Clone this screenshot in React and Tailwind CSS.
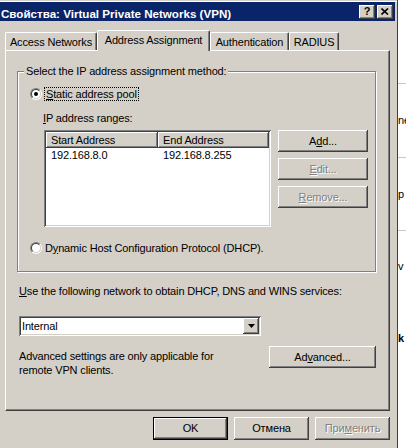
import React from "react";

const raised =
  "shadow-[inset_-1px_-1px_0_#404040,inset_1px_1px_0_#ffffff,inset_-2px_-2px_0_#808080,inset_2px_2px_0_#d4d0c8]";
const sunken =
  "shadow-[inset_1px_1px_0_#808080,inset_-1px_-1px_0_#ffffff,inset_2px_2px_0_#404040,inset_-2px_-2px_0_#d4d0c8]";
const disabledText = "text-[#808080] [text-shadow:1px_1px_0_#ffffff]";

function Radio({ checked }) {
  return (
    <span className="flex h-[12px] w-[12px] shrink-0 items-center justify-center rounded-full border border-t-[#808080] border-l-[#808080] border-b-white border-r-white">
      <span className="flex h-[10px] w-[10px] items-center justify-center rounded-full border border-t-[#404040] border-l-[#404040] border-b-[#d4d0c8] border-r-[#d4d0c8] bg-white">
        {checked && <span className="h-[4px] w-[4px] rounded-full bg-black" />}
      </span>
    </span>
  );
}

function Btn({ children, className = "", disabled = false }) {
  return (
    <div
      className={`flex items-center justify-center bg-[#d4d0c8] ${raised} ${
        disabled ? disabledText : "text-black"
      } ${className}`}
    >
      {children}
    </div>
  );
}

function Tab({ children, w, selected }) {
  if (selected) {
    return (
      <div
        className={`relative z-10 flex h-[21px] ${w} items-start justify-center rounded-t-[2px] border-l border-t border-r border-l-white border-t-white border-r-[#404040] bg-[#d4d0c8] pt-[3px] shadow-[inset_-1px_0_0_#808080]`}
      >
        {children}
      </div>
    );
  }
  return (
    <div
      className={`mb-[1px] flex h-[18px] ${w} items-start justify-center rounded-t-[2px] border-l border-t border-r border-l-white border-t-white border-r-[#404040] bg-[#d4d0c8] pt-[3px] shadow-[inset_-1px_0_0_#808080]`}
    >
      {children}
    </div>
  );
}

export default function App() {
  return (
    <div className="flex h-[448px] w-[406px] overflow-hidden bg-white font-['Liberation_Sans',Arial,sans-serif] text-[11px] leading-[13px] tracking-[-0.15px] text-black">
      {/* Dialog */}
      <div className="flex w-[398px] shrink-0 flex-col border-r border-r-[#404040] bg-[#d4d0c8]">
        <div className="h-[1px] bg-[#d4d0c8]" />
        <div className="h-[1px] bg-white" />
        {/* Title bar */}
        <div className="mr-[2px] flex h-[19px] items-center bg-[#0a246a] pl-[1px] pr-[2px]">
          <span className="flex-1 pt-[3px] text-[11.6px] font-bold tracking-normal text-white">
            Свойства: Virtual Private Networks (VPN)
          </span>
          <div className="flex gap-[2px]">
            <div
              className={`flex h-[14px] w-[16px] items-center justify-center bg-[#d4d0c8] ${raised} text-[11px] font-bold leading-none text-black`}
            >
              ?
            </div>
            <div
              className={`flex h-[14px] w-[16px] items-center justify-center bg-[#d4d0c8] ${raised}`}
            >
              <svg width="8" height="7" viewBox="0 0 8 7">
                <path d="M0.5 0.5 L7 6.5 M7 0.5 L0.5 6.5" stroke="#000" strokeWidth="1.6" />
              </svg>
            </div>
          </div>
        </div>

        {/* Body */}
        <div className="flex flex-col pl-[5px] pr-[7px] pt-[9px]">
          {/* Tabs */}
          <div className="-mb-[1px] flex h-[21px] items-end">
            <Tab w="w-[92px]">Access Networks</Tab>
            <Tab w="w-[113px]" selected>
              Address Assignment
            </Tab>
            <Tab w="w-[79px]">Authentication</Tab>
            <Tab w="w-[50px]">RADIUS</Tab>
          </div>

          {/* Panel */}
          <div className="flex h-[361px] flex-col border border-t-white border-l-white border-b-[#404040] border-r-[#404040] shadow-[inset_-1px_-1px_0_#808080]">
            {/* Group box */}
            <div className="ml-[11px] mt-[20px] flex h-[201px] w-[359px] flex-col border border-[#808080] shadow-[1px_1px_0_#ffffff,inset_1px_1px_0_#ffffff]">
              <span className="-mt-[7px] ml-[6px] w-fit bg-[#d4d0c8] px-[2px] leading-[13px]">
                Select the IP address assignment method:
              </span>
              <div className="ml-[12px] mt-[9px] flex h-[14px] items-center">
                <Radio checked />
                <span className="ml-[2px] border border-dotted border-black px-[1px] leading-[12px]">
                  <u>S</u>tatic address pool
                </span>
              </div>
              <div className="ml-[25px] mt-[10px] h-[14px] leading-[14px]">
                <u>I</u>P address ranges:
              </div>
              <div className="ml-[26px] mt-[5px] flex">
                <div className={`flex h-[97px] w-[227px] flex-col bg-white p-[2px] ${sunken}`}>
                  <div className="flex h-[16px]">
                    <div
                      className={`flex h-[16px] w-[112px] items-center bg-[#d4d0c8] pl-[5px] ${raised}`}
                    >
                      Start Address
                    </div>
                    <div
                      className={`flex h-[16px] w-[111px] items-center bg-[#d4d0c8] pl-[5px] ${raised}`}
                    >
                      End Address
                    </div>
                  </div>
                  <div className="flex h-[15px] items-center">
                    <div className="w-[112px] pl-[5px]">192.168.8.0</div>
                    <div className="w-[111px] pl-[5px]">192.168.8.255</div>
                  </div>
                </div>
                <div className="ml-[7px] flex flex-col gap-[6px]">
                  <Btn className="h-[22px] w-[90px]">
                    <span>
                      A<u>d</u>d...
                    </span>
                  </Btn>
                  <Btn className="h-[22px] w-[90px]" disabled>
                    <span>
                      <u>E</u>dit...
                    </span>
                  </Btn>
                  <Btn className="h-[22px] w-[90px]" disabled>
                    <span>
                      <u>R</u>emove...
                    </span>
                  </Btn>
                </div>
              </div>
              <div className="ml-[12px] mt-[14px] flex h-[14px] items-center">
                <Radio />
                <span className="ml-[3px]">
                  D<u>y</u>namic Host Configuration Protocol (DHCP).
                </span>
              </div>
            </div>

            {/* Network */}
            <div className="ml-[13px] mt-[12px] h-[14px] leading-[14px]">
              <u>U</u>se the following network to obtain DHCP, DNS and WINS services:
            </div>
            <div
              className={`ml-[13px] mt-[18px] flex h-[20px] w-[242px] items-center bg-white p-[2px] ${sunken}`}
            >
              <span className="flex-1 pl-[1px]">Internal</span>
              <div
                className={`flex h-[16px] w-[16px] items-center justify-center bg-[#d4d0c8] ${raised}`}
              >
                <svg width="7" height="4" viewBox="0 0 7 4">
                  <path d="M0 0 H7 L3.5 4 Z" fill="#000" />
                </svg>
              </div>
            </div>

            {/* Advanced */}
            <div className="ml-[13px] mt-[10px] flex">
              <div className="w-[250px] pt-[3px] leading-[14px]">
                Advanced settings are only applicable for
                <br />
                remote VPN clients.
              </div>
              <Btn className="h-[22px] w-[107px]">
                <span>
                  Ad<u>v</u>anced...
                </span>
              </Btn>
            </div>
          </div>

          {/* Bottom buttons */}
          <div className="mt-[6px] flex justify-end gap-[6px]">
            <div
              className={`flex h-[23px] w-[75px] items-center justify-center border border-black bg-[#d4d0c8] ${raised}`}
            >
              OK
            </div>
            <Btn className="h-[23px] w-[75px]">Отмена</Btn>
            <Btn className="h-[23px] w-[75px]" disabled>
              <span>
                При<u>м</u>енить
              </span>
            </Btn>
          </div>
        </div>
      </div>

      {/* Background window strip */}
      <div className="flex flex-1 flex-col overflow-hidden pt-[83px] text-[11px]">
        <div className="flex h-[74px] items-center border-t border-[#c8c8c8]">ne</div>
        <div className="flex h-[73px] items-center border-t border-[#c8c8c8]">p</div>
        <div className="flex h-[72px] items-center border-t border-[#c8c8c8]">v</div>
        <div className="flex h-[73px] items-center font-bold">k</div>
      </div>
    </div>
  );
}
